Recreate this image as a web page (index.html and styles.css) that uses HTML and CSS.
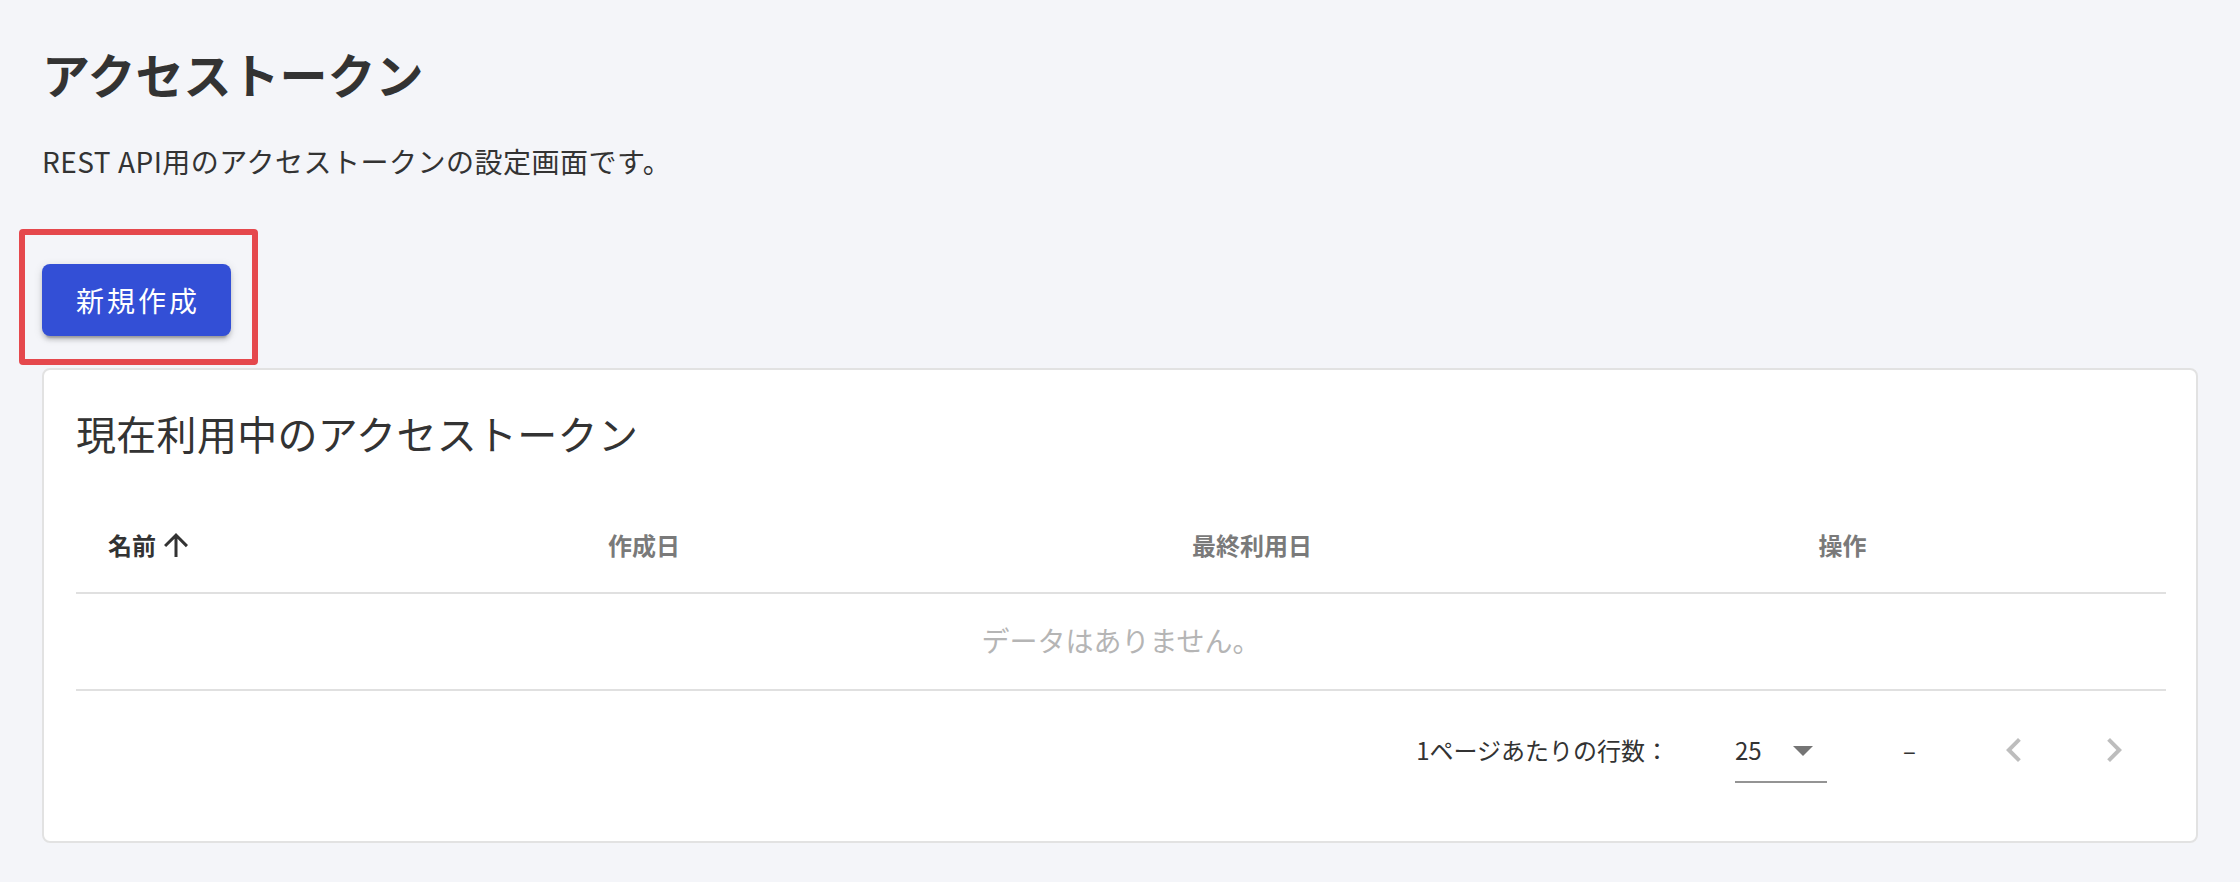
FILE: index.html
```html
<!DOCTYPE html>
<html lang="ja">
<head>
<meta charset="utf-8">
<title>アクセストークン</title>
<link rel="stylesheet" href="styles.css">
</head>
<body>
<main class="page">
  <h1 class="title">アクセストークン</h1>
  <p class="lead">REST API用のアクセストークンの設定画面です。</p>
  <div class="actions">
    <div class="highlight-wrap">
      <button class="btn-primary" type="button">新規作成</button>
      <span class="highlight" aria-hidden="true"></span>
    </div>
  </div>
  <section class="card">
    <h2 class="card-title">現在利用中のアクセストークン</h2>
    <div class="table">
      <div class="thead">
        <div class="th th-sort">名前<svg class="sort-icon" viewBox="0 0 24 24"><path d="M4 12l1.41 1.41L11 7.83V20h2V7.83l5.58 5.59L20 12l-8-8-8 8z"/></svg></div>
        <div class="th">作成日</div>
        <div class="th">最終利用日</div>
        <div class="th">操作</div>
      </div>
      <div class="empty">データはありません。</div>
    </div>
    <div class="pagination">
      <span class="rows-label">1ページあたりの行数：</span>
      <div class="select">
        <span class="select-value">25</span>
        <svg class="select-icon" viewBox="0 0 24 24"><path d="M7 10l5 5 5-5z"/></svg>
      </div>
      <span class="displayed">–</span>
      <svg class="page-btn prev" viewBox="0 0 24 24"><path d="M15.41 7.41L14 6l-6 6 6 6 1.41-1.41L10.83 12z"/></svg>
      <svg class="page-btn next" viewBox="0 0 24 24"><path d="M10 6L8.59 7.41 13.17 12l-4.58 4.59L10 18l6-6z"/></svg>
    </div>
  </section>
</main>
</body>
</html>
```

FILE: styles.css
```css
* { box-sizing: border-box; }

html, body {
  margin: 0;
  padding: 0;
  background: #f4f5f9;
}

body {
  font-family: "Noto Sans CJK JP", "Noto Sans", sans-serif;
  color: #333333;
  width: 2240px;
  height: 882px;
  overflow: hidden;
}

.page {
  padding: 41px 42px 0 42px;
}

.title {
  margin: 0;
  font-size: 48px;
  line-height: 64px;
  font-weight: 700;
  color: #333333;
}

.lead {
  margin: 35px 0 0;
  font-size: 28px;
  line-height: 42px;
  font-weight: 400;
  letter-spacing: 0.5px;
  color: #333333;
}

.actions {
  margin-top: 82px;
  display: flex;
}

.highlight-wrap {
  position: relative;
  display: flex;
}

.btn-primary {
  height: 72px;
  padding: 0 31px 0 34px;
  border: none;
  border-radius: 8px;
  background: #334fd6;
  color: #ffffff;
  font-family: "Noto Sans CJK JP", "Noto Sans", sans-serif;
  font-size: 28px;
  font-weight: 400;
  letter-spacing: 3px;
  box-shadow: 0 6px 2px -4px rgba(0,0,0,0.2), 0 4px 4px 0 rgba(0,0,0,0.14), 0 2px 10px 0 rgba(0,0,0,0.12);
}

.highlight {
  position: absolute;
  left: -23px;
  top: -35px;
  right: -27px;
  bottom: -29px;
  border: 6px solid #e5484d;
  border-radius: 4px;
  pointer-events: none;
}

.card {
  margin-top: 32px;
  background: #ffffff;
  border: 2px solid #e2e2e2;
  border-radius: 8px;
  padding: 35px 30px 32px 32px;
}

.card-title {
  margin: 0 0 36px;
  font-size: 40px;
  line-height: 56px;
  font-weight: 400;
  letter-spacing: 0.3px;
  color: #333333;
}

.thead {
  display: grid;
  grid-template-columns: 227px 682px 534px 1fr;
  align-items: center;
  height: 97px;
  border-bottom: 2px solid #e0e0e0;
}

.th {
  font-size: 24px;
  line-height: 36px;
  font-weight: 700;
  color: #7a7a7a;
  text-align: center;
}

.th-sort {
  display: flex;
  align-items: center;
  justify-content: flex-start;
  padding-left: 32px;
  color: #333333;
  white-space: nowrap;
}

.sort-icon {
  width: 36px;
  height: 36px;
  margin-left: 2px;
  fill: #333333;
}

.empty {
  display: flex;
  align-items: center;
  justify-content: center;
  height: 97px;
  padding-bottom: 4px;
  border-bottom: 2px solid #e0e0e0;
  font-size: 28px;
  line-height: 40px;
  color: #b5b5b5;
}

.pagination {
  display: flex;
  align-items: center;
  justify-content: flex-end;
  height: 118px;
  padding-right: 28px;
  font-size: 24px;
  color: #333333;
}

.rows-label {
  line-height: 48px;
  margin-right: 66px;
  white-space: nowrap;
}

.select {
  position: relative;
  width: 92px;
  height: 57px;
  margin-top: 9px;
  margin-right: 76px;
  padding-bottom: 7px;
  border-bottom: 2px solid rgba(0,0,0,0.42);
}

.select-value {
  display: block;
  line-height: 48px;
}

.select-icon {
  position: absolute;
  right: 0;
  top: 0;
  width: 48px;
  height: 48px;
  fill: #757575;
}

.displayed {
  display: inline-block;
  width: 12px;
  text-align: center;
  line-height: 48px;
  margin-right: 75px;
}

.page-btn {
  width: 48px;
  height: 48px;
  fill: rgba(0,0,0,0.26);
}

.page-btn.prev {
  margin-right: 52px;
}
```
